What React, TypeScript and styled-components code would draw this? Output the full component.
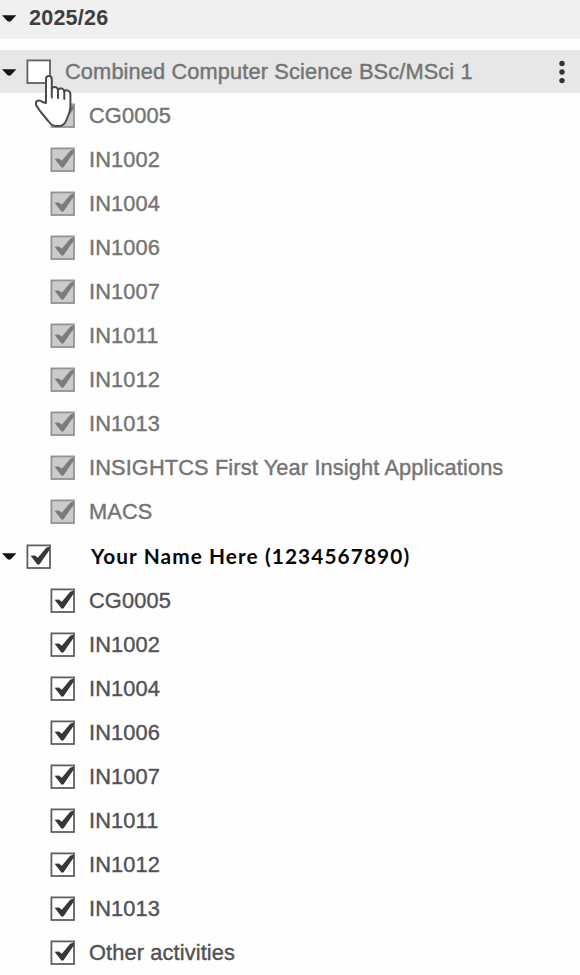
import React from 'react';
import styled, { createGlobalStyle } from 'styled-components';

const GlobalStyle = createGlobalStyle`
  * { box-sizing: border-box; }
  body { margin: 0; background: #fefefe; font-family: "Liberation Sans", Arial, sans-serif; }
`;

type Tone = 'empty' | 'muted' | 'active';

const Tree = styled.main`
  width: 580px;
  height: 975px;
  overflow: hidden;
`;

const YearHeader = styled.header`
  display: flex;
  align-items: center;
  height: 39px;
  margin-bottom: 11px;
  padding: 0 0 2px 2px;
  background: #f0f0f0;
`;

const YearTitle = styled.span`
  margin: 0 0 2px 12px;
  font-size: 21.5px;
  font-weight: 700;
  letter-spacing: 0.25px;
  line-height: 24px;
  color: #3e3e40;
`;

const GroupRow = styled.div<{ $highlight?: boolean }>`
  display: flex;
  align-items: center;
  height: 44.05px;
  padding: 0 12px 0 2px;
  background: ${(p) => (p.$highlight ? 'linear-gradient(#e7e7e7 0 43px, transparent 43px)' : 'transparent')};
`;

const ItemRow = styled.div`
  display: flex;
  align-items: center;
  height: 44.05px;
  padding-left: 50px;
`;

const BoxHolder = styled.span<{ $group?: boolean }>`
  position: relative;
  display: flex;
  flex: none;
  margin-left: ${(p) => (p.$group ? '9px' : '0')};
  margin-bottom: 1px;
`;

const Label = styled.span<{ $muted?: boolean; $gap?: number }>`
  margin-left: ${(p) => p.$gap ?? 13}px;
  font-size: 21.8px;
  line-height: 26px;
  letter-spacing: 0.12px;
  white-space: nowrap;
  color: ${(p) => (p.$muted ? '#747474' : '#525255')};
  -webkit-text-stroke: 0.4px currentColor;
`;

const StudentName = styled.span`
  margin-left: 40px;
  margin-bottom: 2px;
  font-family: Lato, "Open Sans", sans-serif;
  font-size: 20.8px;
  font-weight: 700;
  letter-spacing: 1.1px;
  line-height: 26px;
  white-space: nowrap;
  color: #080808;
`;

const MenuButton = styled.button`
  display: flex;
  margin-left: auto;
  padding: 0;
  border: 0;
  background: none;
`;

const Pointer = styled.svg`
  position: absolute;
  left: 9px;
  top: 15px;
  z-index: 1;
`;

const Caret = () => (
  <svg width="15" height="9" viewBox="0 0 15 9" aria-hidden="true">
    <path d="M0 1.2H14.4L9 7Q7.2 8.6 5.4 7Z" fill="#151515" />
  </svg>
);

const Checkbox = ({ tone }: { tone: Tone }) => {
  const muted = tone === 'muted';
  return (
    <svg width="25" height="25" viewBox="0 0 25 25" aria-hidden="true">
      <rect x="1.4" y="1.4" width="22.6" height="22.6" fill={muted ? '#cbcbcb' : '#fff'} stroke={muted ? '#939393' : '#606060'} strokeWidth="1.8" />
      {tone !== 'empty' && (
        <path d="M4.6 11.8L9 11.6L11.8 13.8L20.2 3.8L23.6 2.6V5.8L13.8 20Q12.4 21.4 11 20Z" fill={muted ? '#7b7b7b' : '#373737'} />
      )}
    </svg>
  );
};

const HandPointer = () => (
  <Pointer width="38" height="54" viewBox="0 0 38 54" aria-hidden="true">
    <path
      d="M11 29V5Q11 2 13.8 2Q16.8 2 16.8 5V14.5Q18.5 12.5 21 13.2Q23 14 23 15.8Q25 13.8 27.2 14.6Q29.3 15.3 29.3 17.4Q31 15.7 33 16.6Q35.4 17.6 35.4 20.3V32Q35.4 36 33.8 40L31.6 45.5Q29.5 52 24 52H21Q17 52 13.2 47L5.8 38L1.4 31.6Q-.2 28 2.5 26.8Q5 26 7.5 28Z"
      fill="#fff" stroke="#4a4a4a" strokeWidth="2" strokeLinejoin="round"
    />
    <path d="M16.8 13V23.5M23 15.5V24M29.3 17V25" fill="none" stroke="#4a4a4a" strokeWidth="2" strokeLinecap="round" />
  </Pointer>
);

const MoreIcon = () => (
  <svg width="12" height="26" viewBox="0 0 12 26" aria-hidden="true">
    <g fill="#333">
      <circle cx="6" cy="4.4" r="2.7" />
      <circle cx="6" cy="13" r="2.7" />
      <circle cx="6" cy="21.6" r="2.7" />
    </g>
  </svg>
);

const modules = ['CG0005', 'IN1002', 'IN1004', 'IN1006', 'IN1007', 'IN1011', 'IN1012', 'IN1013'];

const Item = ({ text, muted }: { text: string; muted?: boolean }) => (
  <ItemRow>
    <BoxHolder><Checkbox tone={muted ? 'muted' : 'active'} /></BoxHolder>
    <Label $muted={muted} $gap={14}>{text}</Label>
  </ItemRow>
);

export default function App() {
  return (
    <Tree>
      <GlobalStyle />
      <YearHeader>
        <Caret />
        <YearTitle>2025/26</YearTitle>
      </YearHeader>
      <GroupRow $highlight>
        <Caret />
        <BoxHolder $group>
          <Checkbox tone="empty" />
          <HandPointer />
        </BoxHolder>
        <Label $muted $gap={14}>Combined Computer Science BSc/MSci 1</Label>
        <MenuButton aria-label="More options"><MoreIcon /></MenuButton>
      </GroupRow>
      {modules.map((m) => <Item key={m} text={m} muted />)}
      <Item text="INSIGHTCS First Year Insight Applications" muted />
      <Item text="MACS" muted />
      <GroupRow>
        <Caret />
        <BoxHolder $group><Checkbox tone="active" /></BoxHolder>
        <StudentName>Your Name Here (1234567890)</StudentName>
      </GroupRow>
      {modules.map((m) => <Item key={m} text={m} />)}
      <Item text="Other activities" />
    </Tree>
  );
}
